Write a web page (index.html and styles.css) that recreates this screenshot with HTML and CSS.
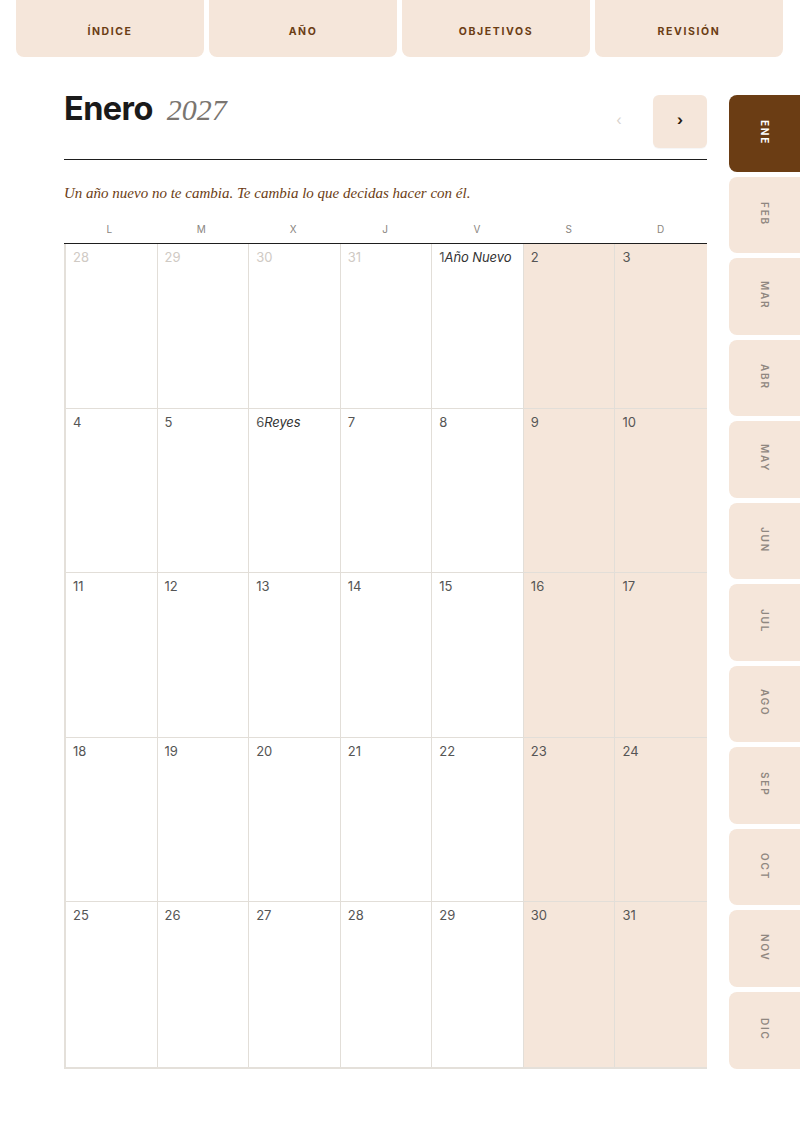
FILE: index.html
```html
<!DOCTYPE html>
<html lang="es">
<head>
<meta charset="utf-8">
<title>Enero 2027</title>
<link rel="stylesheet" href="styles.css">
</head>
<body>
<nav class="topbar">
  <a class="toptab">ÍNDICE</a>
  <a class="toptab">AÑO</a>
  <a class="toptab">OBJETIVOS</a>
  <a class="toptab">REVISIÓN</a>
</nav>
<div class="layout">
  <main class="month">
    <header class="month-head">
      <h1 class="title"><span class="title-month">Enero</span><span class="title-year">2027</span></h1>
      <div class="nav">
        <span class="nav-btn nav-prev">‹</span>
        <span class="nav-btn nav-next">›</span>
      </div>
    </header>
    <p class="quote">Un año nuevo no te cambia. Te cambia lo que decidas hacer con él.</p>
    <div class="weekdays">
      <span>L</span><span>M</span><span>X</span><span>J</span><span>V</span><span>S</span><span>D</span>
    </div>
    <div class="grid">
      <div class="cell other"><span class="num">28</span></div>
      <div class="cell other"><span class="num">29</span></div>
      <div class="cell other"><span class="num">30</span></div>
      <div class="cell other"><span class="num">31</span></div>
      <div class="cell"><span class="num">1</span><span class="event">Año Nuevo</span></div>
      <div class="cell weekend"><span class="num">2</span></div>
      <div class="cell weekend"><span class="num">3</span></div>

      <div class="cell"><span class="num">4</span></div>
      <div class="cell"><span class="num">5</span></div>
      <div class="cell"><span class="num">6</span><span class="event">Reyes</span></div>
      <div class="cell"><span class="num">7</span></div>
      <div class="cell"><span class="num">8</span></div>
      <div class="cell weekend"><span class="num">9</span></div>
      <div class="cell weekend"><span class="num">10</span></div>

      <div class="cell"><span class="num">11</span></div>
      <div class="cell"><span class="num">12</span></div>
      <div class="cell"><span class="num">13</span></div>
      <div class="cell"><span class="num">14</span></div>
      <div class="cell"><span class="num">15</span></div>
      <div class="cell weekend"><span class="num">16</span></div>
      <div class="cell weekend"><span class="num">17</span></div>

      <div class="cell"><span class="num">18</span></div>
      <div class="cell"><span class="num">19</span></div>
      <div class="cell"><span class="num">20</span></div>
      <div class="cell"><span class="num">21</span></div>
      <div class="cell"><span class="num">22</span></div>
      <div class="cell weekend"><span class="num">23</span></div>
      <div class="cell weekend"><span class="num">24</span></div>

      <div class="cell"><span class="num">25</span></div>
      <div class="cell"><span class="num">26</span></div>
      <div class="cell"><span class="num">27</span></div>
      <div class="cell"><span class="num">28</span></div>
      <div class="cell"><span class="num">29</span></div>
      <div class="cell weekend"><span class="num">30</span></div>
      <div class="cell weekend"><span class="num">31</span></div>
    </div>
  </main>
  <aside class="months">
    <a class="mtab active">ENE</a>
    <a class="mtab">FEB</a>
    <a class="mtab">MAR</a>
    <a class="mtab">ABR</a>
    <a class="mtab">MAY</a>
    <a class="mtab">JUN</a>
    <a class="mtab">JUL</a>
    <a class="mtab">AGO</a>
    <a class="mtab">SEP</a>
    <a class="mtab">OCT</a>
    <a class="mtab">NOV</a>
    <a class="mtab">DIC</a>
  </aside>
</div>
</body>
</html>
```

FILE: styles.css
```css
* { box-sizing: border-box; }
html, body { margin: 0; padding: 0; background: #ffffff; }
body {
  width: 800px;
  overflow: hidden;
  font-family: Inter, "Liberation Sans", sans-serif;
  color: #222;
}

.topbar {
  display: grid;
  grid-template-columns: repeat(4, 1fr);
  gap: 5px;
  padding: 0 17px 0 16px;
}
.toptab {
  height: 57px;
  background: #f5e6da;
  border-radius: 0 0 8px 8px;
  padding-top: 25px;
  text-align: center;
  font-size: 10.5px;
  line-height: 14px;
  font-weight: 700;
  letter-spacing: 1.6px;
  color: #6b3d14;
}

.layout {
  display: flex;
  margin-top: 38px;
  padding-left: 64px;
  gap: 22px;
}
.month {
  width: 643px;
  flex: none;
}

.month-head {
  display: flex;
  justify-content: space-between;
  align-items: flex-start;
  padding-bottom: 11px;
  border-bottom: 1px solid #1e1e1e;
}
.title {
  margin: 0;
  display: flex;
  align-items: baseline;
  gap: 14px;
  line-height: 28px;
}
.title-month {
  font-family: Inter, "Liberation Sans", sans-serif;
  font-weight: 700;
  font-size: 32.5px;
  letter-spacing: -0.6px;
  color: #1a1a1a;
}
.title-year {
  font-family: "Liberation Serif", "DejaVu Serif", serif;
  font-style: italic;
  font-weight: 400;
  font-size: 30px;
  color: #7a7570;
}
.nav {
  display: flex;
  gap: 7px;
}
.nav-btn {
  width: 54px;
  height: 53px;
  border-radius: 6px;
  display: flex;
  align-items: center;
  justify-content: center;
  font-size: 14px;
  line-height: 1;
  padding-bottom: 4px;
}
.nav-prev {
  color: #d8d2cc;
}
.nav-next {
  background: #f5e6da;
  color: #2a1a0c;
  font-weight: 700;
  box-shadow: 0 1px 1px rgba(0,0,0,0.04);
}

.quote {
  margin: 24px 0 0;
  font-family: "Liberation Serif", "DejaVu Serif", serif;
  font-style: italic;
  font-size: 15px;
  line-height: 18px;
  letter-spacing: 0;
  color: #6b3d14;
}

.weekdays {
  margin-top: 17px;
  display: grid;
  grid-template-columns: repeat(7, 1fr);
  padding-bottom: 4px;
  border-bottom: 1px solid #1e1e1e;
}
.weekdays span {
  text-align: center;
  font-size: 10px;
  line-height: 20px;
  letter-spacing: 1px;
  color: #8a8580;
}

.grid {
  display: grid;
  grid-template-columns: repeat(7, 1fr);
  grid-auto-rows: 164.5px;
  border-left: 2px solid #e4e0da;
  border-bottom: 2px solid #e4e0da;
}
.cell {
  border-right: 1px solid #e2ded8;
  border-bottom: 1px solid #e2ded8;
  padding: 5px 7px;
  display: flex;
  align-items: baseline;
  font-size: 13px;
  line-height: 16px;
  color: #555;
}
.cell:nth-child(7n) { border-right: 0; }
.cell:nth-last-child(-n+7) { border-bottom: 0; }
.cell.weekend { background: #f5e6da; }
.cell.other .num { color: #cfcac4; }
.event {
  font-style: italic;
  color: #333;
  letter-spacing: -0.1px;
}

.months {
  flex: 1;
  display: flex;
  flex-direction: column;
  gap: 5px;
  min-width: 0;
}
.mtab {
  flex: 1;
  background: #f5e6da;
  border-radius: 8px 0 0 8px;
  display: flex;
  align-items: center;
  justify-content: center;
  padding-bottom: 2px;
  writing-mode: vertical-rl;
  font-size: 10px;
  font-weight: 600;
  letter-spacing: 1.8px;
  color: #8f8780;
}
.mtab.active {
  background: #6b3d14;
  color: #ffffff;
  font-weight: 700;
}
```
